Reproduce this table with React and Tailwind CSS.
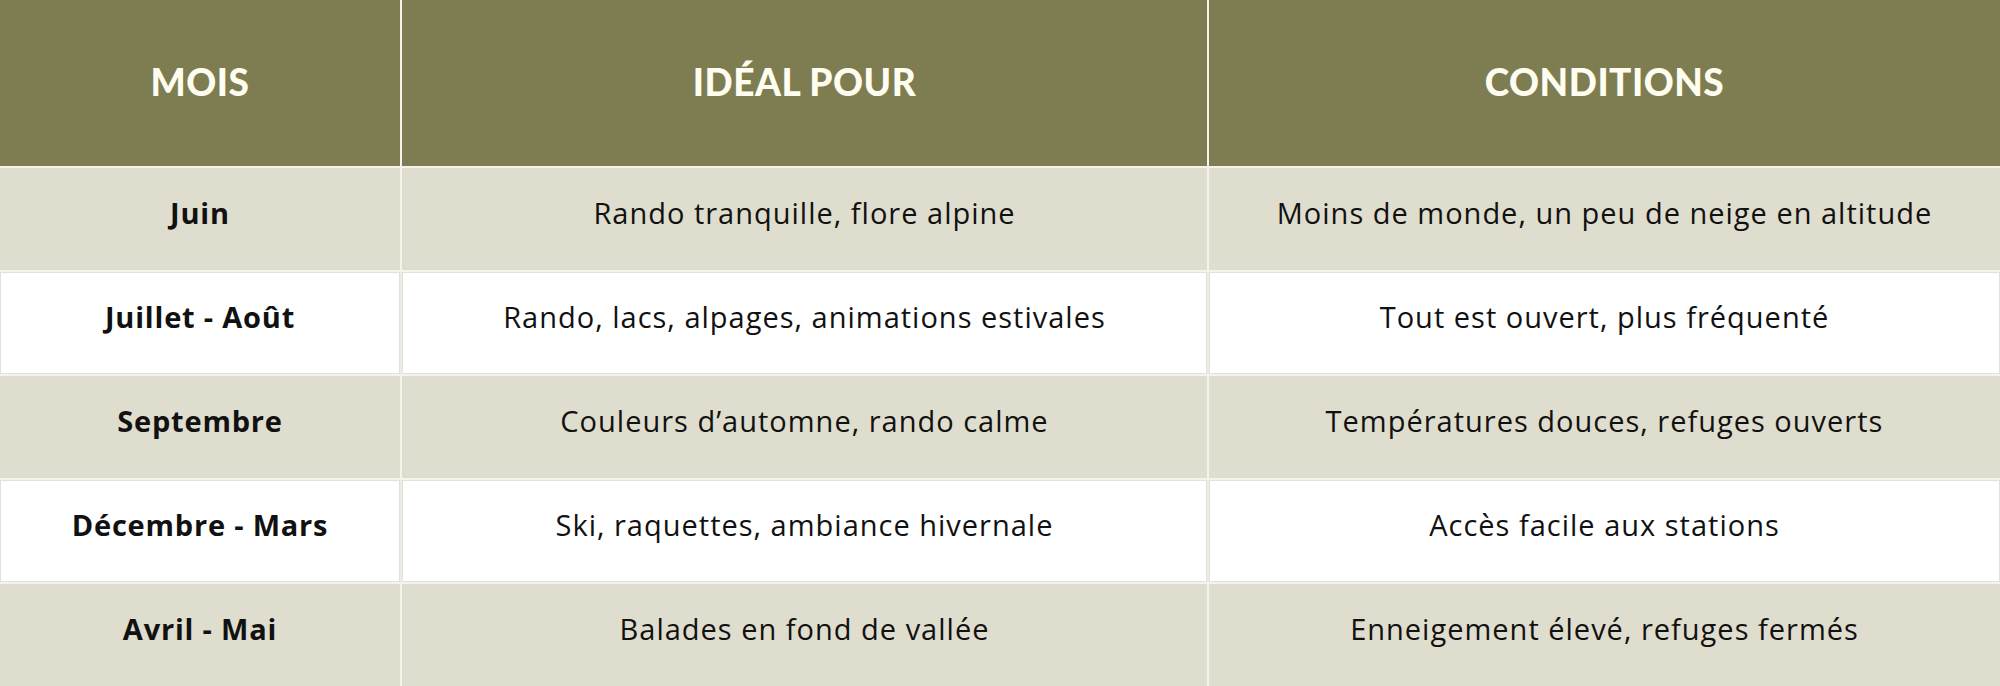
import React from "react";

const rows = [
  ["Juin", "Rando tranquille, flore alpine", "Moins de monde, un peu de neige en altitude", true],
  ["Juillet - Août", "Rando, lacs, alpages, animations estivales", "Tout est ouvert, plus fréquenté", false],
  ["Septembre", "Couleurs d’automne, rando calme", "Températures douces, refuges ouverts", true],
  ["Décembre - Mars", "Ski, raquettes, ambiance hivernale", "Accès facile aux stations", false],
  ["Avril - Mai", "Balades en fond de vallée", "Enneigement élevé, refuges fermés", true],
];

export default function App() {
  return (
    <div className="w-[2000px] h-[686px] bg-[#f4f3ec] flex flex-col gap-[2px] overflow-hidden">
      <div
        className="h-[166px] grid grid-cols-[400px_805px_1fr] gap-[2px] shrink-0"
        style={{ fontFamily: "Lato, 'Open Sans', sans-serif" }}
      >
        {["MOIS", "IDÉAL POUR", "CONDITIONS"].map((h) => (
          <div key={h} className="bg-[#7e7d52] flex items-center justify-center text-[#fffdf0] font-black text-[37px] tracking-[0.5px] pb-[2px]">
            {h}
          </div>
        ))}
      </div>
      {rows.map(([a, b, c, beige], i) => (
        <div
          key={i}
          className={`grid grid-cols-[400px_805px_1fr] gap-[2px] ${i === 4 ? "flex-1" : "h-[102px]"} ${beige ? "" : "bg-[#ecebe4]"}`}
          style={{ fontFamily: "'Open Sans', Lato, sans-serif" }}
        >
          {[a, b, c].map((t, j) => (
            <div
              key={j}
              className={`flex items-center justify-center text-[#111] text-[29px] pb-[12px] ${j === 0 ? "font-bold tracking-[0.8px]" : "font-normal tracking-[1px]"} ${beige ? "bg-[#dfddcd]" : "bg-white border border-[#e2e1db]"}`}
            >
              {t}
            </div>
          ))}
        </div>
      ))}
    </div>
  );
}
